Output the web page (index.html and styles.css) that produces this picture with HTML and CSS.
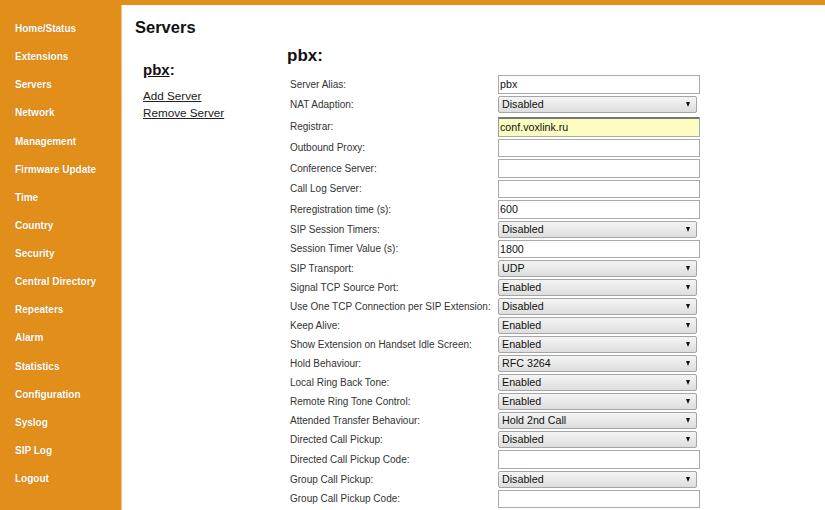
FILE: index.html
```html
<!DOCTYPE html>
<html>
<head>
<meta charset="utf-8">
<link rel="stylesheet" href="styles.css">
</head>
<body>
<div class="topbar"></div>
<div class="layout">
  <nav class="sidebar">
    <a>Home/Status</a>
    <a>Extensions</a>
    <a>Servers</a>
    <a>Network</a>
    <a>Management</a>
    <a>Firmware Update</a>
    <a>Time</a>
    <a>Country</a>
    <a>Security</a>
    <a>Central Directory</a>
    <a>Repeaters</a>
    <a>Alarm</a>
    <a>Statistics</a>
    <a>Configuration</a>
    <a>Syslog</a>
    <a>SIP Log</a>
    <a>Logout</a>
  </nav>
  <main class="content">
    <h1 class="title">Servers</h1>
    <div class="columns">
      <div class="serverlist">
        <div class="srvname"><u>pbx</u>:</div>
        <a class="link">Add Server</a>
        <a class="link">Remove Server</a>
      </div>
      <div class="form">
        <h2 class="formtitle">pbx:</h2>
        <table class="settings">
          <tr><td class="lbl">Server Alias:</td><td><div class="inp">pbx</div></td></tr>
          <tr><td class="lbl">NAT Adaption:</td><td><div class="sel">Disabled<span class="arr"></span></div></td></tr>
          <tr class="reg"><td class="lbl">Registrar:</td><td><div class="inp hl">conf.voxlink.ru</div></td></tr>
          <tr><td class="lbl">Outbound Proxy:</td><td><div class="inp"></div></td></tr>
          <tr><td class="lbl">Conference Server:</td><td><div class="inp"></div></td></tr>
          <tr><td class="lbl">Call Log Server:</td><td><div class="inp"></div></td></tr>
          <tr><td class="lbl">Reregistration time (s):</td><td><div class="inp">600</div></td></tr>
          <tr><td class="lbl">SIP Session Timers:</td><td><div class="sel">Disabled<span class="arr"></span></div></td></tr>
          <tr><td class="lbl">Session Timer Value (s):</td><td><div class="inp">1800</div></td></tr>
          <tr><td class="lbl">SIP Transport:</td><td><div class="sel">UDP<span class="arr"></span></div></td></tr>
          <tr><td class="lbl">Signal TCP Source Port:</td><td><div class="sel">Enabled<span class="arr"></span></div></td></tr>
          <tr><td class="lbl">Use One TCP Connection per SIP Extension:</td><td><div class="sel">Disabled<span class="arr"></span></div></td></tr>
          <tr><td class="lbl">Keep Alive:</td><td><div class="sel">Enabled<span class="arr"></span></div></td></tr>
          <tr><td class="lbl">Show Extension on Handset Idle Screen:</td><td><div class="sel">Enabled<span class="arr"></span></div></td></tr>
          <tr><td class="lbl">Hold Behaviour:</td><td><div class="sel">RFC 3264<span class="arr"></span></div></td></tr>
          <tr><td class="lbl">Local Ring Back Tone:</td><td><div class="sel">Enabled<span class="arr"></span></div></td></tr>
          <tr><td class="lbl">Remote Ring Tone Control:</td><td><div class="sel">Enabled<span class="arr"></span></div></td></tr>
          <tr><td class="lbl">Attended Transfer Behaviour:</td><td><div class="sel">Hold 2nd Call<span class="arr"></span></div></td></tr>
          <tr><td class="lbl">Directed Call Pickup:</td><td><div class="sel">Disabled<span class="arr"></span></div></td></tr>
          <tr><td class="lbl">Directed Call Pickup Code:</td><td><div class="inp"></div></td></tr>
          <tr><td class="lbl">Group Call Pickup:</td><td><div class="sel">Disabled<span class="arr"></span></div></td></tr>
          <tr><td class="lbl">Group Call Pickup Code:</td><td><div class="inp"></div></td></tr>
        </table>
      </div>
    </div>
  </main>
</div>
</body>
</html>
```
FILE: styles.css
```css
html, body {
  margin: 0;
  padding: 0;
  height: 510px;
  overflow: hidden;
  background: #fff;
  font-family: "Liberation Sans", Arial, sans-serif;
  color: #222;
}
.topbar {
  height: 5px;
  background: #e28e1b;
}
.layout {
  display: flex;
  height: 505px;
}
.sidebar {
  width: 122px;
  flex: none;
  background: #e28e1b;
  border-right: 1px solid #f1c27f;
  display: flex;
  flex-direction: column;
  padding-top: 16px;
  box-sizing: border-box;
}
.sidebar a {
  display: block;
  color: #fff;
  font-size: 10px;
  font-weight: bold;
  padding-left: 15px;
  height: 28.13px;
  line-height: 16px;
  text-shadow: 0 0 1px rgba(120,60,0,0.35);
}
.content {
  flex: 1;
  padding-left: 13px;
}
.title {
  margin: 0;
  padding-top: 12px;
  font-size: 16.5px;
  line-height: 21px;
  font-weight: bold;
  color: #111;
}
.columns {
  display: flex;
}
.serverlist {
  width: 144px;
  padding-left: 8px;
  padding-top: 22px;
  flex: none;
}
.srvname {
  font-size: 15px;
  font-weight: bold;
  line-height: 19px;
  color: #111;
  margin-bottom: 8px;
}
.link {
  display: block;
  font-size: 11.7px;
  line-height: 17px;
  color: #222;
  text-decoration: underline;
}
.form {
  flex: none;
}
.formtitle {
  margin: 0;
  padding-top: 8px;
  font-size: 17px;
  line-height: 20px;
  font-weight: bold;
  color: #111;
  margin-bottom: 8px;
}
.settings {
  border-collapse: collapse;
}
.settings td {
  padding: 1px 2px;
  vertical-align: middle;
}
.settings td.lbl {
  padding-left: 3px;
}
.lbl {
  font-size: 10px;
  color: #333;
  width: 204px;
  white-space: nowrap;
}
.inp {
  box-sizing: border-box;
  width: 202px;
  height: 18.5px;
  border: 1px solid #aaa;
  background: #fff;
  font-size: 10.7px;
  line-height: 16px;
  padding-left: 1px;
  color: #111;
}
.inp.hl {
  background: #fafcc0;
  border-top: 2px solid #777;
  border-left: 1px solid #999;
  height: 20px;
  line-height: 16px;
}
.reg td {
  padding-top: 3px;
}
.sel {
  box-sizing: border-box;
  width: 199px;
  height: 17px;
  border: 1px solid #a5a5a5;
  border-radius: 2px;
  background: linear-gradient(#f4f4f4, #dedede);
  font-size: 10.7px;
  line-height: 15px;
  padding-left: 3px;
  color: #111;
  position: relative;
}
.arr {
  position: absolute;
  right: 6px;
  top: 5px;
  width: 0;
  height: 0;
  border-left: 2.5px solid transparent;
  border-right: 2.5px solid transparent;
  border-top: 5px solid #111;
}
```
